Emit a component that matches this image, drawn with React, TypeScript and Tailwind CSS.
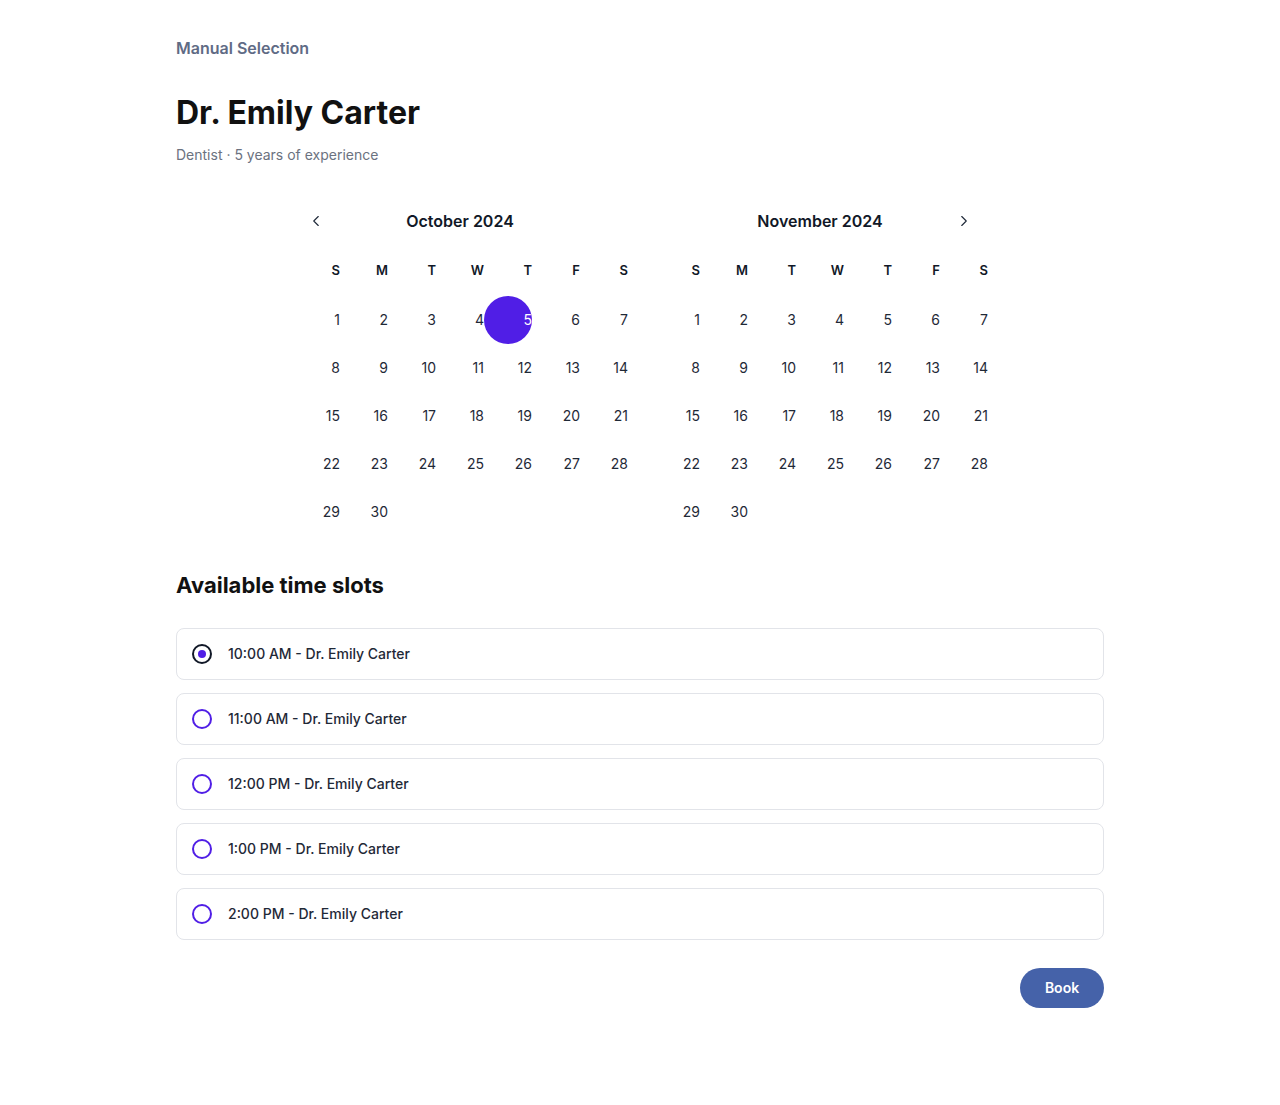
import { ChevronLeft, ChevronRight } from "lucide-react";

const WEEK = ["S", "M", "T", "W", "T", "F", "S"];

interface MonthProps {
  title: string;
  startDay: number;
  days: number;
  selected?: number;
  nav: "left" | "right";
}

function Month({ title, startDay, days, selected, nav }: MonthProps) {
  const cells: (number | null)[] = [];
  for (let i = 0; i < startDay; i++) cells.push(null);
  for (let d = 1; d <= days; d++) cells.push(d);

  return (
    <div className="w-[336px]">
      <div className="flex h-12 items-center">
        <div className="flex h-12 w-12 items-center justify-center">
          {nav === "left" && <ChevronLeft className="h-[18px] w-[18px] text-gray-800" strokeWidth={1.5} />}
        </div>
        <div className="flex-1 text-center text-base font-semibold text-[#111827]">{title}</div>
        <div className="flex h-12 w-12 items-center justify-center">
          {nav === "right" && <ChevronRight className="h-[18px] w-[18px] text-gray-800" strokeWidth={1.5} />}
        </div>
      </div>
      <div className="mt-[2px] grid grid-cols-[repeat(7,48px)]">
        {WEEK.map((w, i) => (
          <div key={i} className="flex h-12 items-center justify-end text-[13px] font-semibold text-[#111827]">
            {w}
          </div>
        ))}
      </div>
      <div className="mt-px grid grid-cols-[repeat(7,48px)]">
        {cells.map((d, i) => (
          <div key={i} className="relative flex h-12 items-center justify-end text-sm text-[#1f2937]">
            {d === selected && <span className="absolute inset-0 rounded-full bg-[#501ee6]" />}
            <span className={d === selected ? "relative text-white" : "relative"}>{d ?? ""}</span>
          </div>
        ))}
      </div>
    </div>
  );
}

const SLOTS = ["10:00 AM", "11:00 AM", "12:00 PM", "1:00 PM", "2:00 PM"];

function Slot({ time, checked }: { time: string; checked?: boolean }) {
  return (
    <label className="flex h-[52px] items-center rounded-lg border border-[#e2e4e9] px-[15px]">
      {checked ? (
        <span className="flex h-5 w-5 items-center justify-center rounded-full border-2 border-[#111827]">
          <span className="h-2 w-2 rounded-full bg-[#501ee6]" />
        </span>
      ) : (
        <span className="h-5 w-5 rounded-full border-2 border-[#501ee6]" />
      )}
      <span className="ml-4 text-sm font-medium text-[#1f2937]">{time} - Dr. Emily Carter</span>
    </label>
  );
}

export default function App() {
  return (
    <div className="min-h-[1105px] bg-white font-['Inter',sans-serif]">
      <div className="mx-auto w-[928px] pt-9 pb-24">
        <p className="text-base font-semibold text-[#5f6b85]">Manual Selection</p>
        <h1 className="mt-[35px] text-[32px] leading-9 font-bold text-[#111111]">Dr. Emily Carter</h1>
        <p className="mt-[14px] text-sm text-[#6b7280]">Dentist · 5 years of experience</p>

        <div className="mt-8 flex justify-center gap-6">
          <Month title="October 2024" startDay={0} days={30} selected={5} nav="left" />
          <Month title="November 2024" startDay={0} days={30} nav="right" />
        </div>

        <h2 className="mt-[35px] text-[22px] leading-7 font-bold text-[#111111]">Available time slots</h2>

        <div className="mt-[29px] flex flex-col gap-[13px]">
          {SLOTS.map((t, i) => (
            <Slot key={t} time={t} checked={i === 0} />
          ))}
        </div>

        <div className="mt-7 flex justify-end">
          <button className="h-10 w-[84px] rounded-full bg-[#4562a9] text-sm font-semibold text-white">Book</button>
        </div>
      </div>
    </div>
  );
}
